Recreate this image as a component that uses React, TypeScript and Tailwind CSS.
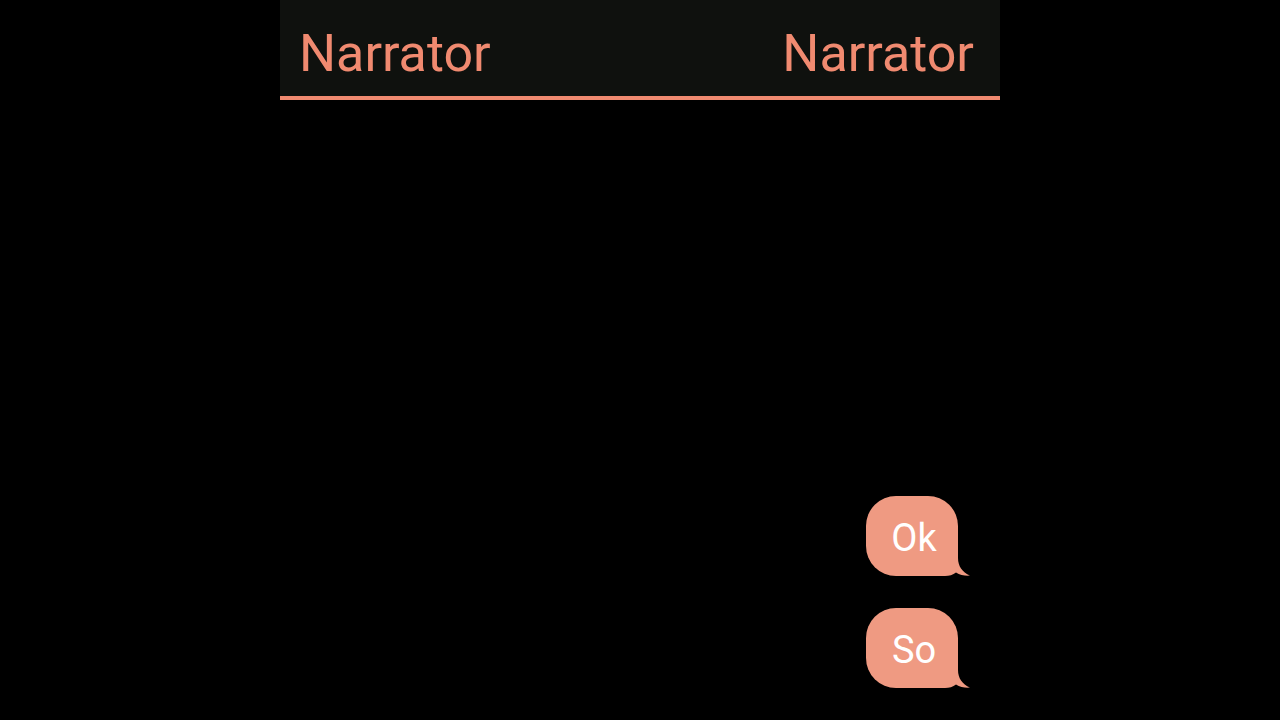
import React from "react";

const messages = ["Ok", "So"];

const Bubble: React.FC<{ text: string }> = ({ text }) => {
  return (
    <div className="relative mr-[42px]">
      {/* tail */}
      <svg
        className="absolute right-[-12px] bottom-0"
        width="42"
        height="30"
        viewBox="0 0 42 30"
      >
        <path
          d="M0 0 L30 0 L30 12 C30 20 34 26 42 29.6 C37 30 32 29 28 26.5 C25 29 21 30 17 30 L0 30 Z"
          fill="#ef9a82"
        />
      </svg>
      <div className="flex h-[80px] w-[92px] items-center justify-center rounded-[30px] bg-[#ef9a82] pt-[3px] pl-[4px] text-[38px] leading-none text-white">
        <span className="relative">{text}</span>
      </div>
    </div>
  );
};

export default function App() {
  return (
    <div
      className="flex h-[720px] w-full justify-center bg-black"
      style={{ fontFamily: "Roboto, 'Noto Sans', sans-serif" }}
    >
      <div className="flex w-[720px] flex-col">
        <header className="flex h-[100px] items-center justify-between border-b-4 border-[#f08a70] bg-[#0f110e] pl-[19px] pr-[26px] text-[52px] leading-none text-[#f08a70]">
          <span className="pt-[12px]">Narrator</span>
          <span className="pt-[12px]">Narrator</span>
        </header>
        <div className="flex flex-1 flex-col items-end justify-end gap-8 pb-8">
          {messages.map((m) => (
            <Bubble key={m} text={m} />
          ))}
        </div>
      </div>
    </div>
  );
}
